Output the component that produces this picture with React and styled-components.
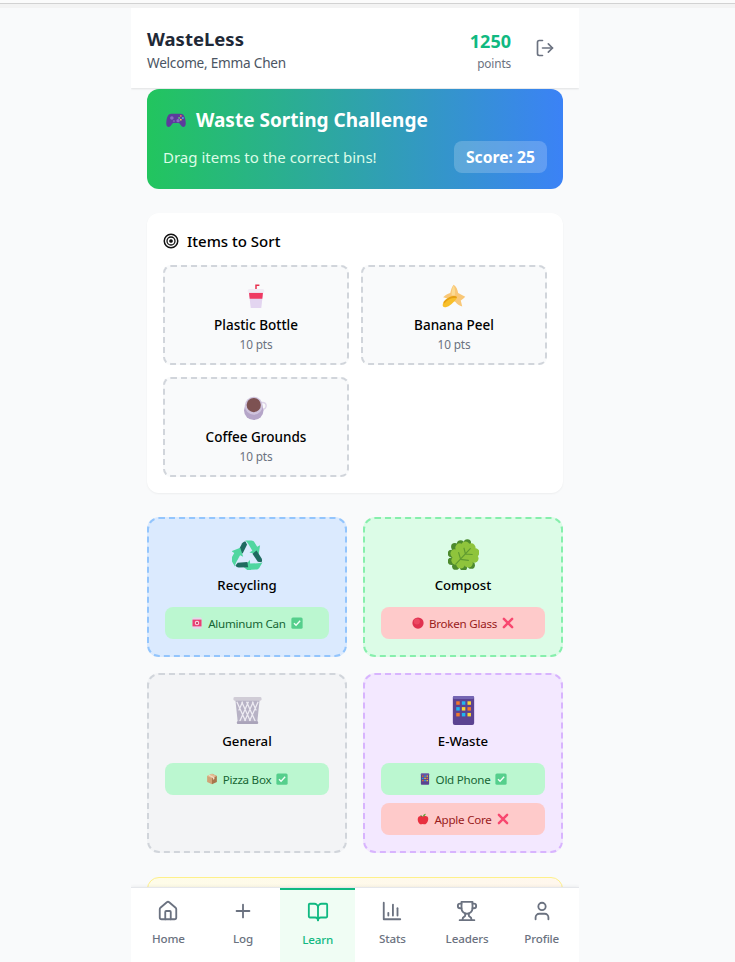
import React from "react";
import styled, { createGlobalStyle } from "styled-components";
import { House, Plus, BookOpen, User, LogOut } from "lucide-react";

const CSSReset = createGlobalStyle`
  *, *::before, *::after { box-sizing: border-box; margin: 0; padding: 0; }
  html, body { height: 100%; overflow: hidden; }
  body { background: #f9fafb; font-family: "Noto Sans", sans-serif; color: #000; }
`;

const Emoji = styled.svg.attrs({ viewBox: "0 0 32 32" })`
  display: block;
  flex: none;
  width: ${(p) => p.$size}px;
  height: ${(p) => p.$size}px;
`;

const NavSvg = styled.svg.attrs({ viewBox: "0 0 24 24" })`
  display: block;
  width: 22px;
  height: 22px;
  fill: none;
  stroke: currentColor;
  stroke-width: 2;
  stroke-linecap: round;
  stroke-linejoin: round;
`;

function StatsIcon() {
  return (
    <NavSvg>
      <path d="M3 3v18h18" />
      <path d="M18 17V9" />
      <path d="M13 17V5" />
      <path d="M8 17v-3" />
    </NavSvg>
  );
}

function TrophyIcon() {
  return (
    <NavSvg>
      <path d="M6 9H4.500a2.500 2.500 0 0 1 0-5H6" />
      <path d="M18 9h1.500a2.500 2.500 0 0 0 0-5H18" />
      <path d="M4 22h16" />
      <path d="M10 14.660V17c0 .550-.470.980-.970 1.210C7.850 18.750 7 20.240 7 22" />
      <path d="M14 14.660V17c0 .550.470.980.970 1.210C16.150 18.750 17 20.240 17 22" />
      <path d="M18 2H6v7a6 6 0 0 0 12 0V2Z" />
    </NavSvg>
  );
}

function Gamepad({ size }) {
  return (
    <Emoji $size={size}>
      <path d="M9 7h14c4 0 6 4 7 11 .7 5-.5 8-3 8-2 0-3.500-2-5-4-1-1.200-2-1.500-3-1.500h-6c-1 0-2 .3-3 1.500-1.500 2-3 4-5 4-2.500 0-3.700-3-3-8C3 11 5 7 9 7z" fill="#5c3b9c" />
      <circle cx="10" cy="13" r="2.600" fill="#8a6cc4" />
      <circle cx="19" cy="17" r="2.400" fill="#8a6cc4" />
      <circle cx="13" cy="17.500" r="1.600" fill="#7a5cb4" />
      <circle cx="23" cy="10" r="1.400" fill="#f26b5b" />
      <circle cx="26" cy="13" r="1.400" fill="#3fb6e8" />
      <circle cx="20.500" cy="13" r="1.300" fill="#5fcf7a" />
      <circle cx="23" cy="15.500" r="1.300" fill="#f4c542" />
    </Emoji>
  );
}

function Target({ size }) {
  return (
    <Emoji $size={size} fill="none" stroke="#111">
      <circle cx="16" cy="16" r="13.500" strokeWidth="3" />
      <circle cx="16" cy="16" r="8" strokeWidth="2.600" />
      <circle cx="16" cy="16" r="3.200" fill="#111" strokeWidth="1" />
    </Emoji>
  );
}

function Cup({ size }) {
  return (
    <Emoji $size={size}>
      <path d="M16 7V1.500h4.500" fill="none" stroke="#e8304f" strokeWidth="2" />
      <path d="M6.500 11h19L23 32H9z" fill="#e3d5f0" />
      <path d="M6.700 11.500h18.600l-.9 8H7.600z" fill="#ef3a62" />
      <rect x="5" y="6.500" width="22" height="5" rx="2" fill="#f1ecf4" />
    </Emoji>
  );
}

function Banana({ size }) {
  return (
    <Emoji $size={size}>
      <path d="M15.500 1C19 3 21 8 21.500 12L31 17c-3 3-5 4-6 5l2 8c-4-1-7-3-9-6l-8-4-8.500-2.500C5 14 9 12.500 11 12c1-4 2-8 4.500-11z" fill="#f9c777" />
      <path d="M15.500 2c2 4 2.500 9 1.500 13h-4c-.5-4 .5-9 2.500-13z" fill="#fcdb92" />
      <path d="M1 27c1-5 7-10 14-11 4-.5 6 1 4 4-4 5-9 10-14 11-3 .5-4.500-1-4-4z" fill="#f8bf2a" />
      <path d="M2 24c3-4 8-7 13-8 4-.5 6 1 4 3-5-1-11 1-16 7z" fill="#e59f14" />
    </Emoji>
  );
}

function Coffee({ size }) {
  return (
    <Emoji $size={size}>
      <circle cx="25" cy="13" r="4.500" fill="none" stroke="#ddd4e8" strokeWidth="2" />
      <circle cx="13" cy="19" r="13" fill="#b5a5c8" />
      <circle cx="13" cy="13" r="12" fill="#cfc3dd" />
      <circle cx="13" cy="12" r="9.500" fill="#7d5252" />
    </Emoji>
  );
}

function Recycle({ size }) {
  const arrow = (
    <>
      <path d="M6 13l4.500-8.500C11.500 3 12.500 2.500 14 2.500L15.500 6 11 15z" fill="#1f6b60" />
      <path d="M13.500 1.500H20c1.500 0 2.500.7 3.300 2L26 8l3-1.500-1.500 9.500-9.500-2 3-2-4-6.500c-1-1.500-2-3-3.500-4.500z" fill="#50d6a0" />
    </>
  );
  return (
    <Emoji $size={size}>
      <g>{arrow}</g>
      <g transform="rotate(120 16 18)">{arrow}</g>
      <g transform="rotate(240 16 18)">{arrow}</g>
    </Emoji>
  );
}

function Leaf({ size }) {
  const back = [[13, 5], [20, 4], [7, 8], [3.500, 15], [3.500, 23], [8, 28], [16, 29], [24, 27]];
  const front = [[24, 9], [28, 14], [27, 20], [21, 25], [13, 26], [8, 22], [7, 15], [12, 9], [18, 7]];
  return (
    <Emoji $size={size}>
      <g fill="#4d8a2e">
        {back.map(([x, y]) => (
          <circle key={`${x}-${y}`} cx={x} cy={y} r="3.800" />
        ))}
        <circle cx="14" cy="16" r="11" />
      </g>
      <g fill="#8fc43c">
        {front.map(([x, y]) => (
          <circle key={`${x}-${y}`} cx={x} cy={y} r="4.500" />
        ))}
        <circle cx="17" cy="17" r="10" />
      </g>
      <path d="M8 26L23 10M13 21l-2-7M13 21l8 1M18 15.500l-1.500-6M18 15.500l7 .5" fill="none" stroke="#5f9a30" strokeWidth="1.200" strokeLinecap="round" />
    </Emoji>
  );
}

function Trash({ size }) {
  return (
    <Emoji $size={size}>
      <path d="M3.500 5h25l-2.500 24H6z" fill="#b7b2c5" />
      <path d="M5 7l9 20M10 7l9 20M15 7l9 20M21 7l4 9M27 7l-9 20M22 7l-9 20M17 7l-9 20M11 7l-4 9" fill="none" stroke="#eeecf3" strokeWidth="1.300" />
      <rect x="1.500" y="2" width="29" height="4" rx="1.500" fill="#d0ccd6" />
      <rect x="5" y="27" width="22" height="3" rx="1" fill="#aaa4ba" />
    </Emoji>
  );
}

function Phone({ size }) {
  const colors = ["#f2792b", "#1fb6f0", "#f8d533", "#1fb6f0", "#f8d533", "#f2792b", "#f2792b", "#1fb6f0", "#f8d533"];
  return (
    <Emoji $size={size}>
      <rect x="5" y="1" width="22" height="30" rx="2" fill="#5b4391" />
      <rect x="5" y="1" width="22" height="3" rx="1.500" fill="#7566b4" />
      {colors.map((c, i) => (
        <rect key={i} x={8.500 + (i % 3) * 5.800} y={6.500 + Math.floor(i / 3) * 6} width="3.600" height="3.600" fill={c} />
      ))}
    </Emoji>
  );
}

function Can({ size }) {
  return (
    <Emoji $size={size}>
      <rect x="4" y="1" width="24" height="30" rx="2" fill="#e6d5ea" />
      <rect x="4" y="7" width="24" height="18" fill="#ea3f74" />
      <circle cx="16" cy="16" r="6" fill="#f7d6df" />
      <circle cx="16" cy="16" r="3" fill="#c62a58" />
    </Emoji>
  );
}

function Check({ size }) {
  return (
    <Emoji $size={size}>
      <rect x="1" y="1" width="30" height="30" rx="4" fill="#55cf8c" />
      <path d="M8 16.500l5.500 5.500L24.500 10" fill="none" stroke="#f2fff8" strokeWidth="3.600" />
    </Emoji>
  );
}

function Dot({ size }) {
  return (
    <Emoji $size={size}>
      <circle cx="16" cy="16" r="15" fill="#e0314f" />
      <circle cx="13" cy="12" r="8" fill="#f4586f" opacity="0.6" />
    </Emoji>
  );
}

function Cross({ size }) {
  return (
    <Emoji $size={size}>
      <path d="M5 5l22 22M27 5L5 27" fill="none" stroke="#f8476f" strokeWidth="6.500" strokeLinecap="round" />
    </Emoji>
  );
}

function Box({ size }) {
  return (
    <Emoji $size={size}>
      <path d="M16 2l13 6v16l-13 6z" fill="#a8764c" />
      <path d="M16 2L3 8v16l13 6z" fill="#d0a376" />
      <path d="M3 8l13 6 13-6-13-6z" fill="#e3bd93" />
      <path d="M9.500 5l13 6v5l-4 1.800v-5L6 6.500z" fill="#f1ddc4" />
    </Emoji>
  );
}

function Apple({ size }) {
  return (
    <Emoji $size={size}>
      <path d="M15 9c-4-2-12-2-13 6-.8 7 4 15 8 15 2 0 3.500-1 5.500-1s3.500 1 5.500 1c4 0 9-8 9-15 0-8-8-8-15-6z" fill="#e8303f" />
      <path d="M15.500 10c0-4 3-7.500 8-8-.5 4-3.500 7-8 8z" fill="#5fa83a" />
      <path d="M15 10c-1-3-3-4-6-5 .5 3 3 5 6 5z" fill="#3f8a33" />
    </Emoji>
  );
}

const sortItems = [
  { name: "Plastic Bottle", Icon: Cup },
  { name: "Banana Peel", Icon: Banana },
  { name: "Coffee Grounds", Icon: Coffee },
];

const bins = [
  { name: "Recycling", Icon: Recycle, bg: "#dbeafe", line: "#93c5fd", items: [{ name: "Aluminum Can", Icon: Can, ok: true }] },
  { name: "Compost", Icon: Leaf, bg: "#dcfce7", line: "#86efac", items: [{ name: "Broken Glass", Icon: Dot, ok: false }] },
  { name: "General", Icon: Trash, bg: "#f3f4f6", line: "#d1d5db", items: [{ name: "Pizza Box", Icon: Box, ok: true }] },
  {
    name: "E-Waste",
    Icon: Phone,
    bg: "#f3e8ff",
    line: "#d8b4fe",
    items: [
      { name: "Old Phone", Icon: Phone, ok: true },
      { name: "Apple Core", Icon: Apple, ok: false },
    ],
  },
];

const tabs = [
  { name: "Home", icon: <House size={22} /> },
  { name: "Log", icon: <Plus size={22} /> },
  { name: "Learn", icon: <BookOpen size={22} />, active: true },
  { name: "Stats", icon: <StatsIcon /> },
  { name: "Leaders", icon: <TrophyIcon /> },
  { name: "Profile", icon: <User size={22} /> },
];

function App() {
  return (
    <Page>
      <CSSReset />
      <BrowserEdge />
      <Column>
        <Header>
          <Titles>
            <Brand>WasteLess</Brand>
            <Welcome>Welcome, Emma Chen</Welcome>
          </Titles>
          <HeaderRight>
            <Points>
              <PointsValue>1250</PointsValue>
              <PointsLabel>points</PointsLabel>
            </Points>
            <IconButton>
              <LogOut size={20} strokeWidth={2} />
            </IconButton>
          </HeaderRight>
        </Header>

        <Main>
          <Banner>
            <BannerTitle>
              <Gamepad size={22} />
              Waste Sorting Challenge
            </BannerTitle>
            <BannerRow>
              <BannerText>Drag items to the correct bins!</BannerText>
              <Score>Score: 25</Score>
            </BannerRow>
          </Banner>

          <Card>
            <CardTitle>
              <Target size={16} />
              Items to Sort
            </CardTitle>
            <ItemGrid>
              {sortItems.map(({ name, Icon }) => (
                <Item key={name}>
                  <ItemIcon>
                    <Icon size={24} />
                  </ItemIcon>
                  <ItemName>{name}</ItemName>
                  <ItemPoints>10 pts</ItemPoints>
                </Item>
              ))}
            </ItemGrid>
          </Card>

          <BinGrid>
            {bins.map(({ name, Icon, bg, line, items }) => (
              <Bin key={name} $bg={bg} $line={line} $tall={name === "General" || name === "E-Waste"}>
                <BinIcon>
                  <Icon size={31} />
                </BinIcon>
                <BinName>{name}</BinName>
                <Chips>
                  {items.map((item) => (
                    <Chip key={item.name} $ok={item.ok}>
                      <item.Icon size={12} />
                      {item.name}
                      {item.ok ? <Check size={12} /> : <Cross size={12} />}
                    </Chip>
                  ))}
                </Chips>
              </Bin>
            ))}
          </BinGrid>

          <TipCard />
        </Main>

        <BottomNav>
          {tabs.map(({ name, icon, active }) => (
            <Tab key={name} $active={active}>
              {icon}
              <TabLabel>{name}</TabLabel>
            </Tab>
          ))}
        </BottomNav>
      </Column>
    </Page>
  );
}

const Page = styled.div`
  width: 735px;
  height: 962px;
  overflow: hidden;
`;

const BrowserEdge = styled.div`
  height: 8px;
  background: linear-gradient(to bottom, #fbfbfb 3px, #d2d2d2 3px, #d2d2d2 4px, #f3f3f3 4px);
`;

const Column = styled.div`
  position: relative;
  width: 448px;
  height: 954px;
  margin-left: 131px;
  overflow: hidden;
`;

const Header = styled.header`
  height: 80px;
  padding: 16px;
  display: flex;
  justify-content: space-between;
  align-items: center;
  background: #fff;
  box-shadow: 0 1px 2px rgba(0, 0, 0, 0.1);
`;

const Titles = styled.div`
  margin-top: 1px;
`;

const Brand = styled.h1`
  font-size: 18.500px;
  line-height: 28px;
  font-weight: 700;
  color: #1f2937;
`;

const Welcome = styled.p`
  font-size: 13.600px;
  letter-spacing: -0.230px;
  line-height: 20px;
  color: #4b5563;
`;

const HeaderRight = styled.div`
  display: flex;
  align-items: center;
  gap: 16px;
`;

const Points = styled.div`
  text-align: right;
  margin-top: 2px;
`;

const PointsValue = styled.div`
  font-size: 18px;
  line-height: 28px;
  font-weight: 700;
  color: #10b981;
`;

const PointsLabel = styled.div`
  font-size: 11.800px;
  letter-spacing: -0.150px;
  line-height: 16px;
  color: #6b7280;
`;

const IconButton = styled.button`
  display: flex;
  padding: 8px;
  border: 0;
  background: none;
  color: #6b7280;
`;

const Main = styled.main`
  padding: 1px 16px 0;
  display: flex;
  flex-direction: column;
  gap: 24px;
`;

const Banner = styled.section`
  height: 100px;
  padding: 16px;
  border-radius: 12px;
  color: #fff;
  background: linear-gradient(to right, #22c55e, #3b82f6);
`;

const BannerTitle = styled.h2`
  display: flex;
  align-items: center;
  gap: 9px;
  height: 28px;
  margin-bottom: 8px;
  padding: 2px 0 0 2px;
  font-size: 19px;
  font-weight: 700;
  line-height: 28px;
`;

const BannerRow = styled.div`
  display: flex;
  justify-content: space-between;
  align-items: center;
`;

const BannerText = styled.p`
  font-size: 15px;
  line-height: 20px;
  color: #dcfce7;
`;

const Score = styled.div`
  height: 32px;
  padding: 0 12px;
  border-radius: 8px;
  background: rgba(255, 255, 255, 0.2);
  font-size: 15.700px;
  font-weight: 700;
  line-height: 32px;
`;

const Card = styled.section`
  padding: 16px;
  border-radius: 12px;
  background: #fff;
  box-shadow: 0 1px 2px rgba(0, 0, 0, 0.05);
`;

const CardTitle = styled.h3`
  display: flex;
  align-items: center;
  gap: 8px;
  height: 24px;
  margin-bottom: 12px;
  font-size: 15px;
  font-weight: 500;
  line-height: 24px;
`;

const ItemGrid = styled.div`
  display: grid;
  grid-template-columns: 1fr 1fr;
  gap: 12px;
`;

const Item = styled.div`
  height: 100px;
  padding: 12px;
  border: 2px dashed #d1d5db;
  border-radius: 8px;
  background: #f9fafb;
  text-align: center;
`;

const ItemIcon = styled.div`
  height: 32px;
  margin-bottom: 4px;
  padding-top: 2px;
  display: flex;
  justify-content: center;
  align-items: center;
`;

const ItemName = styled.div`
  font-size: 13.500px;
  line-height: 20px;
  font-weight: 500;
`;

const ItemPoints = styled.div`
  padding-top: 1px;
  font-size: 11.800px;
  letter-spacing: -0.150px;
  line-height: 16px;
  color: #6b7280;
`;

const BinGrid = styled.div`
  display: grid;
  grid-template-columns: 1fr 1fr;
  gap: 16px;
`;

const Bin = styled.div`
  height: ${(p) => (p.$tall ? 180 : 140)}px;
  padding: 16px;
  border: 2px dashed ${(p) => p.$line};
  border-radius: 12px;
  background: ${(p) => p.$bg};
  text-align: center;
`;

const BinIcon = styled.div`
  height: 36px;
  margin-bottom: 4px;
  padding-top: 3px;
  display: flex;
  justify-content: center;
  align-items: center;
`;

const BinName = styled.div`
  margin-bottom: 12px;
  font-size: 13.200px;
  line-height: 20px;
  font-weight: 500;
`;

const Chips = styled.div`
  display: flex;
  flex-direction: column;
  gap: 8px;
`;

const Chip = styled.div`
  height: 32px;
  display: flex;
  justify-content: center;
  align-items: center;
  gap: 5px;
  border-radius: 8px;
  font-size: 11.600px;
  letter-spacing: -0.250px;
  background: ${(p) => (p.$ok ? "#bbf7d0" : "#fecaca")};
  color: ${(p) => (p.$ok ? "#166534" : "#991b1b")};
`;

const TipCard = styled.div`
  height: 160px;
  border: 1px solid #fef08a;
  border-radius: 12px;
  background: linear-gradient(to right, #fefce8, #fff7ed);
`;

const BottomNav = styled.nav`
  position: absolute;
  left: 0;
  right: 0;
  bottom: 0;
  height: 75px;
  display: flex;
  background: #fff;
  border-top: 1px solid #e5e7eb;
  box-shadow: 0 -1px 3px rgba(0, 0, 0, 0.05);
`;

const Tab = styled.div`
  flex: 1;
  display: flex;
  flex-direction: column;
  align-items: center;
  padding-top: ${(p) => (p.$active ? 11 : 12)}px;
  border-top: ${(p) => (p.$active ? "2px solid #10b981" : "0")};
  background: ${(p) => (p.$active ? "#f0fdf4" : "transparent")};
  color: ${(p) => (p.$active ? "#10b981" : "#6b7280")};
`;

const TabLabel = styled.span`
  margin-top: 9px;
  font-size: 11.600px;
  letter-spacing: -0.150px;
  line-height: 16px;
  font-weight: 500;
`;

export default App;
